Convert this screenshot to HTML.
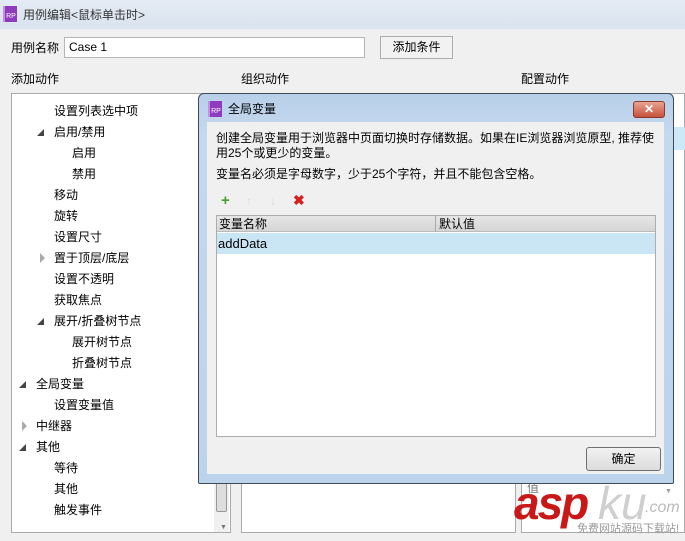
<!DOCTYPE html>
<html><head><meta charset="utf-8"><style>
*{margin:0;padding:0;box-sizing:border-box}
body{width:685px;height:541px;overflow:hidden;background:#f0f0f0;font-family:"Liberation Sans","Noto Sans CJK SC",sans-serif;font-size:12px;color:#000;position:relative}
.a{position:absolute;white-space:nowrap;line-height:15px}
.rp{position:absolute;width:14px;height:16px;background:#8e3bbf;color:#fff;font-size:7px;line-height:22px;text-align:center;border-left:2px solid #c78ee6}
.tri{position:absolute;width:0;height:0}
.dn{border-left:7px solid transparent;border-bottom:7px solid #444}
.rt{border-top:5px solid transparent;border-bottom:5px solid transparent;border-left:5px solid #aaa}
</style></head><body>
<div class="a" style="left:0;top:0;width:685px;height:29px;background:linear-gradient(#e4ebf4,#d9e3ef)"></div>
<div class="rp" style="left:3px;top:6px">RP</div>
<div class="a" style="left:23px;top:8px;color:#333;font-size:12px">用例编辑&lt;鼠标单击时&gt;</div>
<div class="a" style="left:11px;top:41px">用例名称</div>
<div class="a" style="left:64px;top:37px;width:301px;height:21px;background:#fff;border:1px solid #b5b5b5;padding:2px 4px">Case 1</div>
<div class="a" style="left:380px;top:36px;width:73px;height:23px;border:1px solid #adadad;background:#f2f2f2;text-align:center;line-height:21px">添加条件</div>
<div class="a" style="left:11px;top:72px">添加动作</div>
<div class="a" style="left:241px;top:72px">组织动作</div>
<div class="a" style="left:521px;top:72px">配置动作</div>
<div class="a" style="left:11px;top:93px;width:220px;height:440px;background:#fff;border:1px solid #aaa"></div>
<div class="a" style="left:214px;top:460px;width:15px;height:72px;background:#f0f0f0"></div>
<div class="a" style="left:216px;top:482px;width:11px;height:30px;background:#ddd;border:1px solid #999;border-radius:2px"></div>
<div class="a" style="left:220px;top:520px;color:#777;font-size:7px">▼</div>
<div class="a" style="left:241px;top:93px;width:275px;height:440px;background:#fff;border:1px solid #aaa"></div>
<div class="a" style="left:521px;top:93px;width:164px;height:440px;background:#fff;border:1px solid #aaa"></div>
<div class="a" style="left:673px;top:127px;width:12px;height:23px;background:#cde8f7"></div>
<div class="a" style="left:527px;top:481px;color:#777">值</div>
<div class="a" style="left:665px;top:484px;color:#999;font-size:7px">▼</div>

<div class="a" style="left:54px;top:104px">设置列表选中项</div>
<div class="tri dn" style="left:37px;top:129px"></div><div class="a" style="left:54px;top:125px">启用/禁用</div>
<div class="a" style="left:72px;top:146px">启用</div>
<div class="a" style="left:72px;top:167px">禁用</div>
<div class="a" style="left:54px;top:188px">移动</div>
<div class="a" style="left:54px;top:209px">旋转</div>
<div class="a" style="left:54px;top:230px">设置尺寸</div>
<div class="tri rt" style="left:40px;top:253px"></div><div class="a" style="left:54px;top:251px">置于顶层/底层</div>
<div class="a" style="left:54px;top:272px">设置不透明</div>
<div class="a" style="left:54px;top:293px">获取焦点</div>
<div class="tri dn" style="left:37px;top:318px"></div><div class="a" style="left:54px;top:314px">展开/折叠树节点</div>
<div class="a" style="left:72px;top:335px">展开树节点</div>
<div class="a" style="left:72px;top:356px">折叠树节点</div>
<div class="tri dn" style="left:19px;top:381px"></div><div class="a" style="left:36px;top:377px">全局变量</div>
<div class="a" style="left:54px;top:398px">设置变量值</div>
<div class="tri rt" style="left:22px;top:421px"></div><div class="a" style="left:36px;top:419px">中继器</div>
<div class="tri dn" style="left:19px;top:444px"></div><div class="a" style="left:36px;top:440px">其他</div>
<div class="a" style="left:54px;top:461px">等待</div>
<div class="a" style="left:54px;top:482px">其他</div>
<div class="a" style="left:54px;top:503px">触发事件</div>

<div class="a" style="left:198px;top:93px;width:476px;height:391px;background:linear-gradient(#b9d0ea,#c4d8ee 40px,#bcd3ec);border:1px solid #3c4a5a;border-radius:6px 6px 2px 2px"></div>
<div class="rp" style="left:208px;top:101px">RP</div>
<div class="a" style="left:228px;top:102px">全局变量</div>
<div class="a" style="left:633px;top:101px;width:32px;height:17px;background:linear-gradient(#e8a593,#c7503b);border:1px solid #8a3b2e;border-radius:3px;color:#fff;font-weight:bold;text-align:center;line-height:15px;font-size:12px">✕</div>
<div class="a" style="left:207px;top:122px;width:457px;height:352px;background:#f0f0f0"></div>
<div class="a" style="left:216px;top:131px;line-height:15px">创建全局变量用于浏览器中页面切换时存储数据。如果在IE浏览器浏览原型, 推荐使<br>用25个或更少的变量。</div>
<div class="a" style="left:216px;top:167px">变量名必须是字母数字，少于25个字符，并且不能包含空格。</div>
<div class="a" style="left:221px;top:193px;color:#4aa02c;font-weight:bold;font-size:15px">+</div>
<div class="a" style="left:246px;top:194px;color:#cfdbe6;font-size:12px">↑</div>
<div class="a" style="left:270px;top:194px;color:#cfdbe6;font-size:12px">↓</div>
<div class="a" style="left:293px;top:193px;color:#d42020;font-weight:bold;font-size:14px">✖</div>
<div class="a" style="left:216px;top:215px;width:440px;height:222px;background:#fff;border:1px solid #adadad"></div>
<div class="a" style="left:217px;top:216px;width:438px;height:16px;background:linear-gradient(#e6e6e6,#d6d6d6);border-bottom:1px solid #bbb"></div>
<div class="a" style="left:435px;top:216px;width:1px;height:16px;background:#aaa"></div>
<div class="a" style="left:219px;top:217px;line-height:14px">变量名称</div>
<div class="a" style="left:439px;top:217px;line-height:14px">默认值</div>
<div class="a" style="left:217px;top:233px;width:438px;height:21px;background:#cae6f5"></div>
<div class="a" style="left:218px;top:236px;font-size:13px">addData</div>
<div class="a" style="left:586px;top:447px;width:75px;height:24px;border:1px solid #707070;border-radius:3px;background:linear-gradient(#f2f2f2,#dcdcdc);text-align:center;line-height:22px">确定</div>

<div class="a" style="left:514px;top:478px;color:#c81818;font-size:46px;font-weight:bold;font-style:italic;letter-spacing:-2px;line-height:50px">asp</div>
<div class="a" style="left:598px;top:478px;color:#cfcfcf;font-size:46px;font-style:italic;line-height:50px">ku</div>
<div class="a" style="left:645px;top:500px;color:#bbb;font-size:16px;font-style:italic">.com</div>
<div class="a" style="left:577px;top:522px;color:#999;font-size:11px">免费网站源码下载站!</div>
</body></html>
